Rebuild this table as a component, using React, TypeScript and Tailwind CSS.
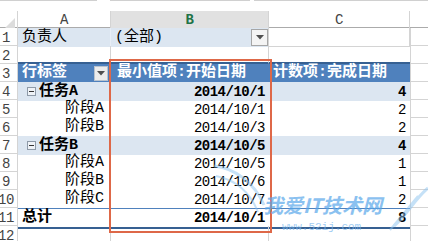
const mono = "font-['Liberation_Mono',monospace]";
const lbl = "font-['Liberation_Mono','Noto_Sans_CJK_SC',monospace] text-[15px] leading-[18px]";
const num = "font-['Liberation_Mono',monospace] text-[14px] tracking-[-0.5px] leading-[18px]";
const row = "grid grid-cols-[18px_93px_158px_141px_18px] h-[18px]";

function RowNum({ n }: { n: number }) {
  return (
    <div className="h-[18px] overflow-hidden border-r border-b border-[#d4d4d4] bg-white">
      <div className={`${num} -ml-[7px] w-[26px] pt-[1px] text-center text-[#444]`}>{n}</div>
    </div>
  );
}

function Tail() {
  return <div className="h-[18px] border-l border-b border-[#d4d4d4] bg-white" />;
}

function Caret({ className }: { className?: string }) {
  return (
    <div className={`flex items-center justify-center ${className ?? ""}`}>
      <svg width="8" height="5" viewBox="0 0 8 5">
        <polygon points="0,0 8,0 4,4.5" fill="#505050" />
      </svg>
    </div>
  );
}

function Minus() {
  return (
    <div className="w-[9px] h-[9px] border border-[#8e9aa8] bg-[#eef2f7] flex items-center justify-center">
      <div className="w-[5px] h-px bg-[#333]" />
    </div>
  );
}

type Line = { label: string; date: string; count: string; group?: boolean };

const lines: Line[] = [
  { label: "任务A", date: "2014/10/1", count: "4", group: true },
  { label: "阶段A", date: "2014/10/1", count: "2" },
  { label: "阶段B", date: "2014/10/3", count: "2" },
  { label: "任务B", date: "2014/10/5", count: "4", group: true },
  { label: "阶段A", date: "2014/10/5", count: "1" },
  { label: "阶段B", date: "2014/10/6", count: "1" },
  { label: "阶段C", date: "2014/10/7", count: "2" },
];

export default function App() {
  return (
    <div className="relative w-[428px] h-[241px] overflow-hidden bg-white text-black">
      {/* formula bar edge */}
      <div className="flex h-[11px]">
        <div className="w-[97px] h-px bg-[#d0d0d0]" />
        <div className="w-[140px] ml-[13px] h-px bg-[#d0d0d0]" />
        <div className="flex-1 ml-[4px] h-px bg-[#d0d0d0]" />
      </div>

      {/* column headers */}
      <div className="grid grid-cols-[18px_93px_158px_141px_18px] h-[17px] border-b border-[#ababab]">
        <div className="border-r border-[#d4d4d4] flex items-end justify-end pr-[2px] pb-[2px]">
          <svg width="11" height="11" viewBox="0 0 11 11">
            <polygon points="11,0 11,11 0,11" fill="#dcdcdc" />
          </svg>
        </div>
        <div className={`${num} leading-[16px] border-r border-[#d4d4d4] text-center text-[#444]`}>A</div>
        <div className={`${num} leading-[15px] bg-[#e1e1e1] border-r border-[#d4d4d4] border-b-2 border-b-[#217346] text-center font-bold text-[#217346]`}>
          B
        </div>
        <div className={`${num} leading-[16px] border-r border-[#d4d4d4] text-center text-[#444]`}>C</div>
        <div />
      </div>

      {/* 1 */}
      <div className={row}>
        <RowNum n={1} />
        <div className={`${lbl} bg-[#dce6f1] border-r border-[#e8eef6] pl-[4px] pt-[1px]`}>负责人</div>
        <div className="bg-[#dce6f1] border-r border-[#d4d4d4] flex">
          <div className={`${lbl} flex-1 pl-[4px] pt-[1px]`}>(全部)</div>
          <Caret className="w-[17px] h-[17px] mt-[1px] border border-[#a6a6a6] bg-[#f4f4f4]" />
        </div>
        <div className="border-r border-b border-[#d4d4d4]" />
        <Tail />
      </div>

      {/* 2 */}
      <div className={row}>
        <RowNum n={2} />
        <div className="border-r border-[#d4d4d4] border-b-2 border-b-[#366092]" />
        <div className="border-r border-[#d4d4d4] border-b-2 border-b-[#366092]" />
        <div className="border-b-2 border-[#366092]" />
        <Tail />
      </div>

      {/* 3 */}
      <div className={row}>
        <RowNum n={3} />
        <div className="bg-[#4f81bd] flex items-center pl-[4px] pr-[3px]">
          <div className={`${lbl} flex-1 font-bold text-white`}>行标签</div>
          <Caret className="w-[14px] h-[15px] bg-[#ececec] border border-[#b9c3ce]" />
        </div>
        <div className={`${lbl} bg-[#4f81bd] pl-[6px] font-bold text-white whitespace-nowrap`}>最小值项:开始日期</div>
        <div className={`${lbl} bg-[#4f81bd] pl-[4px] font-bold text-white whitespace-nowrap`}>计数项:完成日期</div>
        <Tail />
      </div>

      {/* 4 - 10 */}
      {lines.map((l, i) => (
        <div key={i} className={row}>
          <RowNum n={i + 4} />
          {l.group ? (
            <div className="bg-[#dce6f1] flex items-center pl-[9px] gap-[3px]">
              <Minus />
              <span className={`${lbl} font-bold`}>{l.label}</span>
            </div>
          ) : (
            <div className={`${lbl} pl-[47px]`}>{l.label}</div>
          )}
          <div className={`${num} pr-[4px] pt-[1px] text-right ${l.group ? "bg-[#dce6f1] font-bold" : ""}`}>{l.date}</div>
          <div className={`${num} pr-[4px] pt-[1px] text-right ${l.group ? "bg-[#dce6f1] font-bold" : ""}`}>{l.count}</div>
          <Tail />
        </div>
      ))}

      {/* 11 */}
      <div className={row}>
        <RowNum n={11} />
        <div className={`${lbl} leading-[15px] font-bold pl-[4px] border-t border-[#4f81bd] border-b-2 border-b-[#366092]`}>总计</div>
        <div className={`${num} leading-[15px] font-bold text-right pr-[4px] border-t border-[#4f81bd] border-b-2 border-b-[#366092]`}>2014/10/1</div>
        <div className={`${num} leading-[15px] font-bold text-right pr-[4px] border-t border-[#4f81bd] border-b-2 border-b-[#366092]`}>8</div>
        <Tail />
      </div>

      {/* 12 */}
      <div className={row}>
        <RowNum n={12} />
        <div className="border-r border-[#d4d4d4]" />
        <div className="border-r border-[#d4d4d4]" />
        <div />
        <Tail />
      </div>

      {/* highlight box around column B */}
      <div className="absolute left-[109px] top-[59px] w-[163px] h-[174px] border-2 border-[#de6848]" />

      {/* watermark */}
      <svg className="absolute left-[214px] top-[160px] opacity-50" width="214" height="81" viewBox="0 0 214 81">
        <path d="M0 6 C20 8 40 22 50 45" stroke="#8cc4f0" strokeWidth="3" fill="none" />
        <path d="M2 16 C22 20 36 32 44 52" stroke="#8cc4f0" strokeWidth="2" fill="none" />
        <path d="M214 28 C200 40 192 56 180 66" stroke="#8cc4f0" strokeWidth="3" fill="none" />
        <path d="M204 36 C194 48 186 58 176 70" stroke="#8cc4f0" strokeWidth="2" fill="none" />
      </svg>
      <div className="absolute left-[263px] top-[194px] text-[20px] leading-[22px] font-bold italic font-['Noto_Sans_CJK_SC',sans-serif] text-[#5aa8ea] opacity-70 whitespace-nowrap">
        我爱IT技术网
      </div>
      <div className={`absolute left-[282px] top-[221px] text-[11px] leading-[12px] ${mono} text-[#7ab8ee] opacity-70`}>
        www.52ij.com
      </div>
    </div>
  );
}
